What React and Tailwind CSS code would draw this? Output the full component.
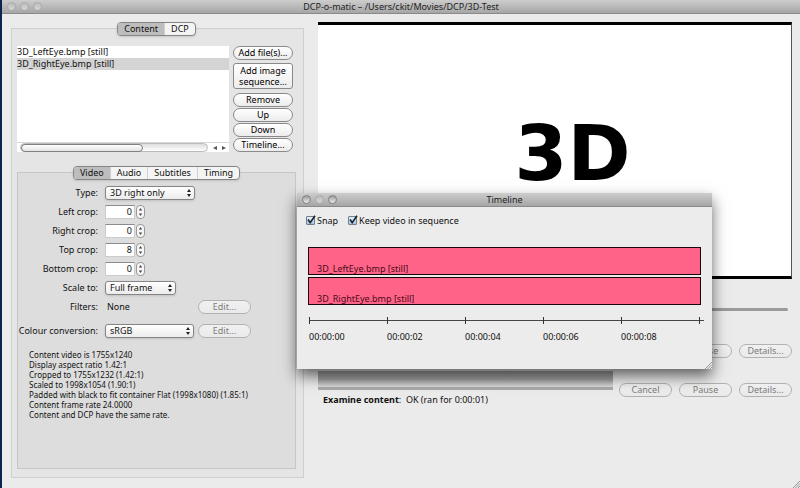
import { useState } from 'react';
import clsx from 'clsx';

const FILES = ['3D_LeftEye.bmp [still]', '3D_RightEye.bmp [still]'];

const INFO = [
  'Content video is 1755x1240',
  'Display aspect ratio 1.42:1',
  'Cropped to 1755x1232 (1.42:1)',
  'Scaled to 1998x1054 (1.90:1)',
  'Padded with black to fit container Flat (1998x1080) (1.85:1)',
  'Content frame rate 24.0000',
  'Content and DCP have the same rate.',
];

const TICKS = ['00:00:00', '00:00:02', '00:00:04', '00:00:06', '00:00:08'];

function TitleBar({ title, faded }) {
  return (
    <div className="relative flex h-[14px] shrink-0 items-center justify-center border-b border-[#8a8a8a] bg-gradient-to-b from-[#cdcdcd] to-[#a6a6a6]">
      <div className="absolute inset-y-0 left-[5px] flex items-center gap-[4px]">
        {[0, 1, 2].map((i) => (
          <span
            key={i}
            className={clsx(
              'h-[9px] w-[9px] rounded-full border bg-gradient-to-b',
              faded || i === 1
                ? 'border-[#a9a9a9] from-[#bcbcbc] to-[#d6d6d6]'
                : 'border-[#808080] from-[#9c9c9c] to-[#ececec]'
            )}
          />
        ))}
      </div>
      <h1 className="text-[9px] leading-[12px] text-[#222222]">{title}</h1>
    </div>
  );
}

function Tabs({ items, active, onChange }) {
  return (
    <div className="relative mx-auto -mt-[7px] flex h-[14px] w-fit overflow-hidden rounded-[4px] border border-[#858585] bg-[#f4f4f4] shadow-sm">
      {items.map((item) => (
        <button
          key={item}
          type="button"
          onClick={() => onChange(item)}
          className={clsx(
            'border-r border-[#d0d0d0] px-[6px] text-[9px] leading-[12px] last:border-r-0',
            item === active && 'bg-[#bdbdbd]'
          )}
        >
          {item}
        </button>
      ))}
    </div>
  );
}

function Button({ children, square, disabled, className }) {
  return (
    <button
      type="button"
      disabled={disabled}
      className={clsx(
        'border bg-gradient-to-b text-[9px]',
        square ? 'h-[26px] rounded-[3px] leading-[11px]' : 'h-[14px] rounded-full leading-[12px]',
        disabled
          ? 'border-[#b2b2b2] from-[#f0f0f0] to-[#eaeaea] text-[#7c7c7c]'
          : 'border-[#8a8a8a] from-white to-[#ececec] text-black',
        className
      )}
    >
      {children}
    </button>
  );
}

function Row({ label, id, children }) {
  return (
    <div className="flex h-[19px] items-center gap-[7px]">
      <label htmlFor={id} className="w-[80px] shrink-0 text-right whitespace-nowrap">
        {label}
      </label>
      {children}
    </div>
  );
}

function Select({ id, value, width }) {
  return (
    <div className={clsx('relative', width)}>
      <select
        id={id}
        defaultValue={value}
        className="block h-[14px] w-full appearance-none rounded-[3px] border border-[#858585] bg-gradient-to-b from-white to-[#ececec] pl-[4px] text-[9px] leading-[12px] shadow-sm"
      >
        <option>{value}</option>
      </select>
      <svg viewBox="0 0 6 8" className="pointer-events-none absolute top-[3px] right-[3px] h-[8px] w-[6px]">
        <path d="M3 0 L5 3 H1 Z M3 8 L5 5 H1 Z" fill="#222222" />
      </svg>
    </div>
  );
}

function Spin({ id, value }) {
  const [n, setN] = useState(value);

  return (
    <div className="flex items-center gap-[1px]">
      <input
        id={id}
        type="text"
        value={n}
        onChange={(e) => setN(e.target.value)}
        className="h-[14px] w-[30px] border border-t-[#8c8c8c] border-r-[#cccccc] border-b-[#cccccc] border-l-[#cccccc] bg-white pr-[2px] text-right text-[9px] leading-[12px]"
      />
      <button
        type="button"
        aria-label="Step value"
        className="flex h-[14px] w-[9px] items-center justify-center rounded-[4px] border border-[#999999] bg-[#f6f6f6]"
      >
        <svg viewBox="0 0 5 10" className="h-[10px] w-[5px]">
          <path d="M2.5 1 L4.2 3.4 H0.8 Z M2.5 9 L4.2 6.6 H0.8 Z" fill="#444444" />
        </svg>
      </button>
    </div>
  );
}

function Check({ label }) {
  const [on, setOn] = useState(true);

  return (
    <label className="flex items-center gap-[2px]">
      <span className="relative h-[9px] w-[9px]">
        <input
          type="checkbox"
          checked={on}
          onChange={() => setOn(!on)}
          className="block h-[9px] w-[9px] appearance-none rounded-[1px] border border-[#6f7f91] bg-gradient-to-b from-[#e6f0f9] to-[#a9c4dd]"
        />
        {on && (
          <svg viewBox="0 0 10 10" className="pointer-events-none absolute -top-[1px] left-0 h-[10px] w-[10px]">
            <path d="M2 4.5 L4.2 7.6 L9 0.8" fill="none" stroke="#18222e" strokeWidth="1.6" />
          </svg>
        )}
      </span>
      {label}
    </label>
  );
}

function Grip() {
  return (
    <svg viewBox="0 0 8 8" className="absolute right-0 bottom-0 h-[8px] w-[8px]">
      <path d="M1 8 L8 1 M3.5 8 L8 3.5 M6 8 L8 6" stroke="#8c8c8c" strokeWidth="0.9" />
    </svg>
  );
}

function ContentList() {
  const [selected, setSelected] = useState(1);

  return (
    <div className="flex min-w-0 flex-1 flex-col bg-white">
      <ul className="flex-1">
        {FILES.map((file, i) => (
          <li key={file}>
            <button
              type="button"
              onClick={() => setSelected(i)}
              className={clsx('block h-[12px] w-full text-left leading-[12px]', i === selected && 'bg-[#d4d4d4]')}
            >
              {file}
            </button>
          </li>
        ))}
      </ul>
      <div className="flex h-[10px] items-center gap-[3px] border-t border-[#d8d8d8] pl-[3px]">
        <div className="h-[9px] flex-1 rounded-full border border-[#bbbbbb] bg-gradient-to-b from-[#dddddd] to-white">
          <div className="h-[8px] w-[122px] rounded-full border border-[#808080] bg-gradient-to-b from-white to-[#e4e4e4]" />
        </div>
        <svg viewBox="0 0 18 8" className="h-[8px] w-[18px]">
          <path d="M2 4 L6 2 V6 Z M15 4 L11 2 V6 Z" fill="#555555" />
        </svg>
      </div>
    </div>
  );
}

function ContentPanel() {
  const [tab, setTab] = useState('Content');
  const [sub, setSub] = useState('Video');

  return (
    <section className="mt-[14px] mb-[10px] ml-[9px] flex w-[293px] shrink-0 flex-col border border-[#cfcfcf] bg-[#e5e5e5] pr-[7px] pb-[8px] pl-[5px]">
      <Tabs items={['Content', 'DCP']} active={tab} onChange={setTab} />

      <div className="mt-[10px] flex gap-[4px] pr-[3px]">
        <ContentList />
        <div className="flex w-[60px] flex-col gap-[1px]">
          <Button>Add file(s)...</Button>
          <Button square className="my-[2px]">
            Add image sequence...
          </Button>
          <Button className="mt-[1px]">Remove</Button>
          <Button>Up</Button>
          <Button>Down</Button>
          <Button>Timeline...</Button>
        </div>
      </div>

      <div className="mt-[20px] flex-1 border border-[#c6c6c6] bg-[#dddddd]">
        <Tabs items={['Video', 'Audio', 'Subtitles', 'Timing']} active={sub} onChange={setSub} />

        <div className="mt-[3px]">
          <Row label="Type:" id="type">
            <Select id="type" value="3D right only" width="w-[90px]" />
          </Row>
          <Row label="Left crop:" id="left">
            <Spin id="left" value="0" />
          </Row>
          <Row label="Right crop:" id="right">
            <Spin id="right" value="0" />
          </Row>
          <Row label="Top crop:" id="top">
            <Spin id="top" value="8" />
          </Row>
          <Row label="Bottom crop:" id="bottom">
            <Spin id="bottom" value="0" />
          </Row>
          <Row label="Scale to:" id="scale">
            <Select id="scale" value="Full frame" width="w-[71px]" />
          </Row>
          <div className="flex h-[19px] items-center gap-[7px]">
            <span className="w-[80px] text-right">Filters:</span>
            <span className="w-[86px] pl-[2px]">None</span>
            <Button disabled className="w-[53px]">
              Edit...
            </Button>
          </div>
          <div className="mt-[5px] flex items-center gap-[4px]">
            <Row label="Colour conversion:" id="colour">
              <Select id="colour" value="sRGB" width="w-[89px]" />
            </Row>
            <Button disabled className="w-[53px]">
              Edit...
            </Button>
          </div>
        </div>

        <div className="mt-[10px] pl-[11px] text-[8px] leading-[10px] whitespace-nowrap">
          {INFO.map((line) => (
            <p key={line}>{line}</p>
          ))}
        </div>
      </div>
    </section>
  );
}

function JobButtons({ names }) {
  return (
    <div className="flex justify-end gap-[7px]">
      {names.map((name) => (
        <Button key={name} disabled className="w-[53px]">
          {name}
        </Button>
      ))}
    </div>
  );
}

function Viewer() {
  return (
    <section className="flex min-w-0 flex-1 flex-col pt-[8px] pr-[8px] pl-[14px]">
      <div className="flex h-[257px] items-center justify-center border-t-[3px] border-r border-b-[3px] border-t-black border-r-[#555555] border-b-black bg-white pt-[6px] pl-[36px]">
        <span className="font-['DejaVu_Sans'] text-[76px] leading-[80px] font-bold text-black">3D</span>
      </div>
      <div className="mt-[29px] mr-[4px] h-[3px] rounded-full bg-[#9a9a9a]" />

      <div className="mt-[33px]">
        <JobButtons names={['Cancel', 'Pause', 'Details...']} />
      </div>
      <div className="mt-[13px] flex gap-[6px]">
        <div className="h-[19px] flex-1 border-b-[3px] border-[#a9a9a9] bg-gradient-to-b from-[#a0a0a0] from-50% to-[#dcdcdc]" />
        <div className="pt-[12px]">
          <JobButtons names={['Cancel', 'Pause', 'Details...']} />
        </div>
      </div>
      <p className="-mt-[4px] pl-[5px]">
        <strong>Examine content</strong>:&nbsp; OK (ran for 0:00:01)
      </p>
    </section>
  );
}

function Timeline() {
  return (
    <section className="absolute top-[193px] left-[295px] flex h-[176px] w-[415px] flex-col bg-[#ececec] shadow-[0_7px_14px_rgba(0,0,0,0.6)]">
      <TitleBar title="Timeline" />
      <div className="mt-[7px] flex gap-[10px] pl-[9px]">
        <Check label="Snap" />
        <Check label="Keep video in sequence" />
      </div>
      <div className="mt-[20px] mr-[11px] ml-[11px] flex flex-col gap-[2px]">
        {FILES.map((file) => (
          <div
            key={file}
            className="flex h-[28px] items-end border border-[#1c060c] bg-[#ff6488] pl-[8px] leading-[11px] text-[#4a0a1a]"
          >
            {file}
          </div>
        ))}
      </div>
      <div className="mt-[12px] mr-[8px] ml-[12px]">
        <div className="flex h-[7px] items-center">
          <div className="relative h-px w-full bg-[#444444]">
            {[...TICKS, 'end'].map((t, i) => (
              <span key={t} className="absolute -top-[3px] h-[7px] w-px bg-[#333333]" style={{ left: i * 78 }} />
            ))}
          </div>
        </div>
        <div className="mt-[6px] flex">
          {TICKS.map((t) => (
            <span key={t} className="w-[78px]">
              {t}
            </span>
          ))}
        </div>
      </div>
      <Grip />
    </section>
  );
}

export default function App() {
  return (
    <main className="relative flex min-h-screen flex-col overflow-hidden border-l-2 border-[#0b2350] bg-[#ebebeb] font-['Noto_Sans',sans-serif] text-[9px] leading-[13px] text-[#111111]">
      <TitleBar title="DCP-o-matic – /Users/ckit/Movies/DCP/3D-Test" faded />
      <div className="flex flex-1">
        <ContentPanel />
        <Viewer />
      </div>
      <Grip />
      <Timeline />
    </main>
  );
}
